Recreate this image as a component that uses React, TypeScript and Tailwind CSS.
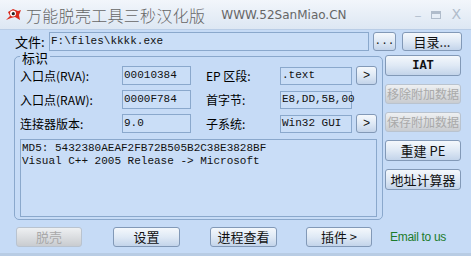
const cjk = "font-['SimSun','Noto_Sans_CJK_SC',sans-serif]";
const mono = "font-['Liberation_Mono','Noto_Sans_CJK_SC',monospace]";

function Btn({ label, disabled, className }: { label: string; disabled?: boolean; className: string }) {
  return (
    <div
      className={`flex items-center justify-center whitespace-nowrap rounded-[3px] border ${
        disabled
          ? "border-[#b9c3cf] bg-gradient-to-b from-[#eef0f2] to-[#c9ccd0] text-[#a9a9a9]"
          : "border-[#8299b7] bg-gradient-to-b from-[#f4f8fc] via-[#dfe9f5] to-[#c3d4ea] text-[#111]"
      } ${className}`}
    >
      {label}
    </div>
  );
}

function Field({ value, className }: { value: string; className: string }) {
  return (
    <div className={`flex items-center whitespace-nowrap border border-[#8aa8cc] bg-[#cadef7] pl-[1px] text-[11px] leading-none text-[#111] ${mono} ${className}`}>
      {value}
    </div>
  );
}

export default function App() {
  return (
    <div className={`relative h-[256px] w-[471px] overflow-hidden bg-[#c6dbf6] text-[12px] ${cjk}`}>
      {/* title bar */}
      <div className="flex h-[30px] items-center border-b border-[#b9cde6] bg-gradient-to-b from-[#f2f6fb] to-[#dde7f3] pl-[5px] pr-[10px]">
        <svg width="17" height="15" viewBox="0 0 17 15" className="mr-[4px]">
          <path d="M1 13 L5 9 L3 5 L8 2 L13 4 L16 3 L14 8 L15 13 L10 10 L6 11 Z" fill="#d92a1c" />
          <circle cx="8" cy="6.5" r="3" fill="#fff" />
          <circle cx="8.3" cy="6.7" r="1.6" fill="#222" />
        </svg>
        <span className="text-[16px] font-light tracking-[0.3px] text-[#666]" style={{ fontFamily: "'Noto Sans CJK SC', sans-serif" }}>
          万能脱壳工具三秒汉化版
        </span>
        <span className="ml-[16px] font-['DejaVu_Sans',sans-serif] text-[12px] text-[#666]">WWW.52SanMiao.CN</span>
        <div className="ml-auto flex items-center gap-[10px] text-[#b0bccb]">
          <span className="text-[13px]">–</span>
          <span className="mt-[1px] h-[8px] w-[10px] border border-t-[3px] border-[#b0bccb]" />
          <span className="font-['DejaVu_Sans',sans-serif] text-[14px]">X</span>
        </div>
      </div>

      {/* file row */}
      <div className="flex items-center pl-[15px] pt-[2px]">
        <span className="w-[34px] text-[13px] leading-[13px]">文件:</span>
        <Field value="F:\files\kkkk.exe" className="h-[19px] w-[320px]" />
        <Btn label="..." className={`ml-[4px] h-[19px] w-[23px] text-[11px] ${mono}`} />
        <Btn label="目录..." className="ml-[6px] h-[19px] w-[60px] text-[13px]" />
      </div>

      <div className="flex pl-[14px] pt-[5px]">
        {/* group box */}
        <div className="relative h-[164px] w-[369px] rounded-[5px] border border-[#8aa8cc] pl-[5px] pr-[6px] pt-[9px]">
          <span className="absolute left-[5px] top-[-6px] bg-[#c6dbf6] px-[2px] text-[13px] leading-[13px]">标识</span>
          <div className="grid grid-cols-[102px_70px_14px_74px_72px_22px] items-center gap-y-[5px]">
            <span>入口点(RVA):</span>
            <Field value="00010384" className="h-[19px] w-[69px]" />
            <span />
            <span>EP 区段:</span>
            <Field value=".text" className="h-[18px] w-[72px]" />
            <Btn label=">" className={`ml-[4px] h-[19px] w-[21px] text-[12px] ${mono}`} />

            <span>入口点(RAW):</span>
            <Field value="0000F784" className="h-[19px] w-[69px]" />
            <span />
            <span>首字节:</span>
            <Field value="E8,DD,5B,00" className="h-[18px] w-[72px]" />
            <span />

            <span>连接器版本:</span>
            <Field value="9.0" className="h-[19px] w-[69px]" />
            <span />
            <span>子系统:</span>
            <Field value="Win32 GUI" className="h-[18px] w-[72px]" />
            <Btn label=">" className={`ml-[4px] h-[19px] w-[21px] text-[12px] ${mono}`} />
          </div>
          <div className={`mt-[6px] h-[78px] w-[357px] border border-[#8aa8cc] bg-[#c9ddf7] px-[1px] pt-[2px] text-[11px] leading-[13px] text-[#111] ${mono}`}>
            <div>MD5: 5432380AEAF2FB72B505B2C38E3828BF</div>
            <div>Visual C++ 2005 Release -&gt; Microsoft</div>
          </div>
        </div>

        {/* right buttons */}
        <div className="ml-[2px] mt-[-1px] flex flex-col gap-[8px]">
          <Btn label="IAT" className={`h-[21px] w-[76px] text-[12px] font-bold ${mono}`} />
          <Btn label="移除附加数据" disabled className="h-[20px] w-[76px] text-[12px]" />
          <Btn label="保存附加数据" disabled className="h-[20px] w-[76px] text-[12px]" />
          <Btn label="重建 PE" className="h-[21px] w-[76px] text-[13px]" />
          <Btn label="地址计算器" className="h-[21px] w-[76px] text-[13px]" />
        </div>
      </div>

      {/* bottom row */}
      <div className="flex items-center pl-[16px] pt-[7px] text-[13px]">
        <Btn label="脱壳" disabled className="h-[20px] w-[66px]" />
        <Btn label="设置" className="ml-[31px] h-[20px] w-[67px]" />
        <Btn label="进程查看" className="ml-[30px] h-[20px] w-[67px]" />
        <Btn label="插件 >" className="ml-[29px] h-[20px] w-[66px]" />
        <span className="ml-[18px] font-['Liberation_Sans',sans-serif] text-[12px] tracking-[-0.3px] text-[#1c7c2c]">Email to us</span>
      </div>
      <div className="absolute bottom-0 left-0 h-[3px] w-full bg-[#b8cce4]" />
    </div>
  );
}
